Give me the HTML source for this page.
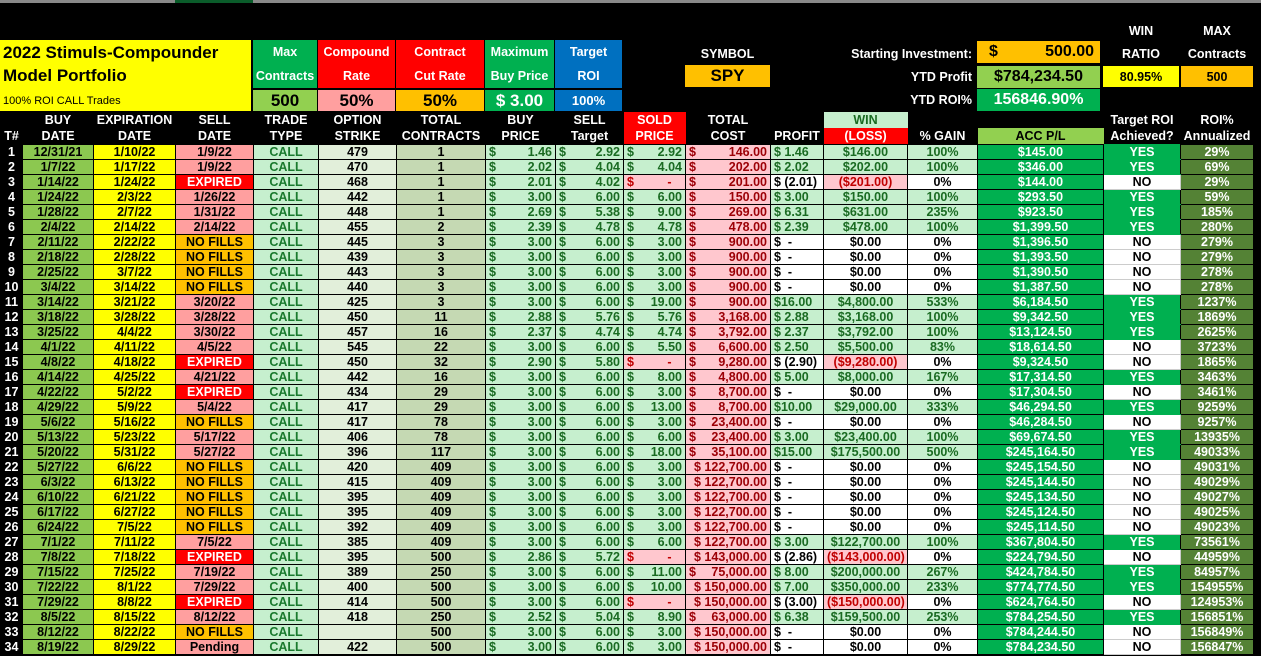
<!DOCTYPE html>
<html><head><meta charset="utf-8"><style>
*{margin:0;padding:0;box-sizing:border-box}
body{width:1261px;height:656px;background:#000;overflow:hidden;position:relative;font-family:"Liberation Sans Narrow","Liberation Sans",sans-serif;font-weight:bold;font-size:12.5px;color:#000}
.a{position:absolute;display:flex;align-items:center;justify-content:center;text-align:center}
.w{color:#fff}
table{position:absolute;left:0;top:112px;border-collapse:collapse;table-layout:fixed;width:1253px}
td{height:15px;line-height:14px;padding:0 3px;text-align:center;white-space:nowrap;overflow:hidden;border:1px solid #000}
thead td{height:16px;background:#000;color:#fff;border:none;font-size:12.5px}
i{font-style:normal;float:left}
td.n{background:#000;color:#fff}
.bd{background:#8cc850}
.ex{background:#ffff00}
.sd{background:#ff9f9f}
.xp{background:#ff0000;color:#fff}
.nf{background:#ffc000}
.tt{background:#c6efce;color:#1a7a2e}
.st{background:#e2efda}
.tc{background:#c5d9b3}
.m{background:#c6efce;color:#1a6b22;text-align:right}
.sp{background:#ffc7ce;color:#c00000;text-align:right}
.tco{background:#ffc7ce;color:#9c0006;text-align:right}
.pf{background:#c6efce;color:#1a6b22;text-align:left}
.pw{background:#fff;text-align:left}
.wg{background:#c6efce;color:#1a6b22}
.ww{background:#fff}
.wl{background:#ffc7ce;color:#c00000}
.acc{background:#00b050;color:#fff}
.y{background:#00b050;color:#fff;border-top-color:#00b050;border-bottom-color:#00b050}
.no{background:#fff;border-color:#ccc}
.r{background:#548235;color:#fff}
</style></head><body>
<div style="position:absolute;left:0;top:0;width:1261px;height:3px;background:#888"></div>
<div style="position:absolute;left:175px;top:0;width:78px;height:3px;background:#0a5c2a"></div>

<div style="position:absolute;left:0;top:40px;width:251px;height:71px;background:#ffff00;font-family:'Liberation Sans',sans-serif">
<div style="position:absolute;left:3px;top:3px;font-size:17px">2022 Stimuls-Compounder</div>
<div style="position:absolute;left:3px;top:26px;font-size:17px">Model Portfolio</div>
<div style="position:absolute;left:3px;top:55px;font-size:11px;font-weight:normal;font-family:'Liberation Sans Narrow','Liberation Sans',sans-serif">100% ROI CALL Trades</div>
</div>

<div class="a w" style="left:253px;top:40px;width:64px;height:48px;background:#00b050;line-height:24px">Max<br>Contracts</div>
<div class="a" style="left:253px;top:90px;width:64px;height:21px;background:#92d050;font-size:17px">500</div>
<div class="a w" style="left:318px;top:40px;width:77px;height:48px;background:#ff0000;line-height:24px">Compound<br>Rate</div>
<div class="a" style="left:318px;top:90px;width:77px;height:21px;background:#ff9f9f;font-size:17px">50%</div>
<div class="a w" style="left:396px;top:40px;width:88px;height:48px;background:#ff0000;line-height:24px">Contract<br>Cut Rate</div>
<div class="a" style="left:396px;top:90px;width:88px;height:21px;background:#ffc000;font-size:17px">50%</div>
<div class="a w" style="left:485px;top:40px;width:69px;height:48px;background:#00b050;line-height:24px">Maximum<br>Buy Price</div>
<div class="a w" style="left:485px;top:90px;width:69px;height:21px;background:#00b050;font-size:17px">$ 3.00</div>
<div class="a w" style="left:555px;top:40px;width:67px;height:48px;background:#0070c0;line-height:24px">Target<br>ROI</div>
<div class="a w" style="left:555px;top:90px;width:67px;height:21px;background:#0070c0;font-size:13px">100%</div>

<div class="a w" style="left:685px;top:45px;width:85px;height:18px">SYMBOL</div>
<div class="a" style="left:685px;top:65px;width:85px;height:22px;background:#ffc000;font-size:17px;font-family:'Liberation Sans',sans-serif">SPY</div>
<div class="a w" style="left:780px;top:45px;width:192px;height:18px;justify-content:flex-end">Starting Investment:</div>
<div style="position:absolute;left:977px;top:41px;width:123px;height:22px;background:#ffc000;font-size:16px;line-height:22px;padding:0 6px 0 12px"><span style="float:left">$</span><span style="float:right">500.00</span></div>
<div class="a w" style="left:780px;top:68px;width:192px;height:18px;justify-content:flex-end">YTD Profit</div>
<div class="a" style="left:977px;top:66px;width:123px;height:22px;background:#92d050;font-size:16px">$784,234.50</div>
<div class="a w" style="left:780px;top:91px;width:192px;height:18px;justify-content:flex-end">YTD ROI%</div>
<div class="a w" style="left:977px;top:89px;width:123px;height:22px;background:#00b050;font-size:16px">156846.90%</div>
<div class="a w" style="left:1103px;top:22px;width:76px;height:18px">WIN</div>
<div class="a w" style="left:1103px;top:45px;width:76px;height:18px">RATIO</div>
<div class="a" style="left:1103px;top:66px;width:76px;height:21px;background:#ffff00">80.95%</div>
<div class="a w" style="left:1181px;top:22px;width:72px;height:18px">MAX</div>
<div class="a w" style="left:1181px;top:45px;width:72px;height:18px">Contracts</div>
<div class="a" style="left:1181px;top:66px;width:72px;height:21px;background:#ffc000">500</div>

<table>
<colgroup><col style="width:22px"><col style="width:71px"><col style="width:82px"><col style="width:78px"><col style="width:65px"><col style="width:78px"><col style="width:89px"><col style="width:70px"><col style="width:68px"><col style="width:62px"><col style="width:85px"><col style="width:53px"><col style="width:84px"><col style="width:70px"><col style="width:126px"><col style="width:77px"><col style="width:73px"></colgroup>
<thead>
<tr><td></td><td>BUY</td><td>EXPIRATION</td><td>SELL</td><td>TRADE</td><td>OPTION</td><td>TOTAL</td><td>BUY</td><td>SELL</td><td style="background:#ff0000">SOLD</td><td>TOTAL</td><td></td><td style="background:#c6efce;color:#1a6b22">WIN</td><td></td><td></td><td>Target ROI</td><td>ROI%</td></tr>
<tr><td>T#</td><td>DATE</td><td>DATE</td><td>DATE</td><td>TYPE</td><td>STRIKE</td><td>CONTRACTS</td><td>PRICE</td><td>Target</td><td style="background:#ff0000">PRICE</td><td>COST</td><td>PROFIT</td><td style="background:#ff0000">(LOSS)</td><td>% GAIN</td><td style="background:#92d050;color:#000">ACC P/L</td><td>Achieved?</td><td>Annualized</td></tr>
</thead>
<tbody>
<tr><td class="n">1</td><td class="bd">12/31/21</td><td class="ex">1/10/22</td><td class="sd">1/9/22</td><td class="tt">CALL</td><td class="st">479</td><td class="tc">1</td><td class="m"><i>$</i>1.46</td><td class="m"><i>$</i>2.92</td><td class="m"><i>$</i>2.92</td><td class="tco"><i>$</i>146.00</td><td class="pf">$ 1.46</td><td class="wg">$146.00</td><td class="wg">100%</td><td class="acc">$145.00</td><td class="y">YES</td><td class="r">29%</td></tr>
<tr><td class="n">2</td><td class="bd">1/7/22</td><td class="ex">1/17/22</td><td class="sd">1/9/22</td><td class="tt">CALL</td><td class="st">470</td><td class="tc">1</td><td class="m"><i>$</i>2.02</td><td class="m"><i>$</i>4.04</td><td class="m"><i>$</i>4.04</td><td class="tco"><i>$</i>202.00</td><td class="pf">$ 2.02</td><td class="wg">$202.00</td><td class="wg">100%</td><td class="acc">$346.00</td><td class="y">YES</td><td class="r">69%</td></tr>
<tr><td class="n">3</td><td class="bd">1/14/22</td><td class="ex">1/24/22</td><td class="xp">EXPIRED</td><td class="tt">CALL</td><td class="st">468</td><td class="tc">1</td><td class="m"><i>$</i>2.01</td><td class="m"><i>$</i>4.02</td><td class="sp"><i>$</i>-&nbsp;&nbsp;&nbsp;</td><td class="tco"><i>$</i>201.00</td><td class="pw">$ (2.01)</td><td class="wl">($201.00)</td><td class="ww">0%</td><td class="acc">$144.00</td><td class="no">NO</td><td class="r">29%</td></tr>
<tr><td class="n">4</td><td class="bd">1/24/22</td><td class="ex">2/3/22</td><td class="sd">1/26/22</td><td class="tt">CALL</td><td class="st">442</td><td class="tc">1</td><td class="m"><i>$</i>3.00</td><td class="m"><i>$</i>6.00</td><td class="m"><i>$</i>6.00</td><td class="tco"><i>$</i>150.00</td><td class="pf">$ 3.00</td><td class="wg">$150.00</td><td class="wg">100%</td><td class="acc">$293.50</td><td class="y">YES</td><td class="r">59%</td></tr>
<tr><td class="n">5</td><td class="bd">1/28/22</td><td class="ex">2/7/22</td><td class="sd">1/31/22</td><td class="tt">CALL</td><td class="st">448</td><td class="tc">1</td><td class="m"><i>$</i>2.69</td><td class="m"><i>$</i>5.38</td><td class="m"><i>$</i>9.00</td><td class="tco"><i>$</i>269.00</td><td class="pf">$ 6.31</td><td class="wg">$631.00</td><td class="wg">235%</td><td class="acc">$923.50</td><td class="y">YES</td><td class="r">185%</td></tr>
<tr><td class="n">6</td><td class="bd">2/4/22</td><td class="ex">2/14/22</td><td class="sd">2/14/22</td><td class="tt">CALL</td><td class="st">455</td><td class="tc">2</td><td class="m"><i>$</i>2.39</td><td class="m"><i>$</i>4.78</td><td class="m"><i>$</i>4.78</td><td class="tco"><i>$</i>478.00</td><td class="pf">$ 2.39</td><td class="wg">$478.00</td><td class="wg">100%</td><td class="acc">$1,399.50</td><td class="y">YES</td><td class="r">280%</td></tr>
<tr><td class="n">7</td><td class="bd">2/11/22</td><td class="ex">2/22/22</td><td class="nf">NO FILLS</td><td class="tt">CALL</td><td class="st">445</td><td class="tc">3</td><td class="m"><i>$</i>3.00</td><td class="m"><i>$</i>6.00</td><td class="m"><i>$</i>3.00</td><td class="tco"><i>$</i>900.00</td><td class="pw">$ &nbsp;-</td><td class="ww">$0.00</td><td class="ww">0%</td><td class="acc">$1,396.50</td><td class="no">NO</td><td class="r">279%</td></tr>
<tr><td class="n">8</td><td class="bd">2/18/22</td><td class="ex">2/28/22</td><td class="nf">NO FILLS</td><td class="tt">CALL</td><td class="st">439</td><td class="tc">3</td><td class="m"><i>$</i>3.00</td><td class="m"><i>$</i>6.00</td><td class="m"><i>$</i>3.00</td><td class="tco"><i>$</i>900.00</td><td class="pw">$ &nbsp;-</td><td class="ww">$0.00</td><td class="ww">0%</td><td class="acc">$1,393.50</td><td class="no">NO</td><td class="r">279%</td></tr>
<tr><td class="n">9</td><td class="bd">2/25/22</td><td class="ex">3/7/22</td><td class="nf">NO FILLS</td><td class="tt">CALL</td><td class="st">443</td><td class="tc">3</td><td class="m"><i>$</i>3.00</td><td class="m"><i>$</i>6.00</td><td class="m"><i>$</i>3.00</td><td class="tco"><i>$</i>900.00</td><td class="pw">$ &nbsp;-</td><td class="ww">$0.00</td><td class="ww">0%</td><td class="acc">$1,390.50</td><td class="no">NO</td><td class="r">278%</td></tr>
<tr><td class="n">10</td><td class="bd">3/4/22</td><td class="ex">3/14/22</td><td class="nf">NO FILLS</td><td class="tt">CALL</td><td class="st">440</td><td class="tc">3</td><td class="m"><i>$</i>3.00</td><td class="m"><i>$</i>6.00</td><td class="m"><i>$</i>3.00</td><td class="tco"><i>$</i>900.00</td><td class="pw">$ &nbsp;-</td><td class="ww">$0.00</td><td class="ww">0%</td><td class="acc">$1,387.50</td><td class="no">NO</td><td class="r">278%</td></tr>
<tr><td class="n">11</td><td class="bd">3/14/22</td><td class="ex">3/21/22</td><td class="sd">3/20/22</td><td class="tt">CALL</td><td class="st">425</td><td class="tc">3</td><td class="m"><i>$</i>3.00</td><td class="m"><i>$</i>6.00</td><td class="m"><i>$</i>19.00</td><td class="tco"><i>$</i>900.00</td><td class="pf">$16.00</td><td class="wg">$4,800.00</td><td class="wg">533%</td><td class="acc">$6,184.50</td><td class="y">YES</td><td class="r">1237%</td></tr>
<tr><td class="n">12</td><td class="bd">3/18/22</td><td class="ex">3/28/22</td><td class="sd">3/28/22</td><td class="tt">CALL</td><td class="st">450</td><td class="tc">11</td><td class="m"><i>$</i>2.88</td><td class="m"><i>$</i>5.76</td><td class="m"><i>$</i>5.76</td><td class="tco"><i>$</i>3,168.00</td><td class="pf">$ 2.88</td><td class="wg">$3,168.00</td><td class="wg">100%</td><td class="acc">$9,342.50</td><td class="y">YES</td><td class="r">1869%</td></tr>
<tr><td class="n">13</td><td class="bd">3/25/22</td><td class="ex">4/4/22</td><td class="sd">3/30/22</td><td class="tt">CALL</td><td class="st">457</td><td class="tc">16</td><td class="m"><i>$</i>2.37</td><td class="m"><i>$</i>4.74</td><td class="m"><i>$</i>4.74</td><td class="tco"><i>$</i>3,792.00</td><td class="pf">$ 2.37</td><td class="wg">$3,792.00</td><td class="wg">100%</td><td class="acc">$13,124.50</td><td class="y">YES</td><td class="r">2625%</td></tr>
<tr><td class="n">14</td><td class="bd">4/1/22</td><td class="ex">4/11/22</td><td class="sd">4/5/22</td><td class="tt">CALL</td><td class="st">545</td><td class="tc">22</td><td class="m"><i>$</i>3.00</td><td class="m"><i>$</i>6.00</td><td class="m"><i>$</i>5.50</td><td class="tco"><i>$</i>6,600.00</td><td class="pf">$ 2.50</td><td class="wg">$5,500.00</td><td class="wg">83%</td><td class="acc">$18,614.50</td><td class="no">NO</td><td class="r">3723%</td></tr>
<tr><td class="n">15</td><td class="bd">4/8/22</td><td class="ex">4/18/22</td><td class="xp">EXPIRED</td><td class="tt">CALL</td><td class="st">450</td><td class="tc">32</td><td class="m"><i>$</i>2.90</td><td class="m"><i>$</i>5.80</td><td class="sp"><i>$</i>-&nbsp;&nbsp;&nbsp;</td><td class="tco"><i>$</i>9,280.00</td><td class="pw">$ (2.90)</td><td class="wl">($9,280.00)</td><td class="ww">0%</td><td class="acc">$9,324.50</td><td class="no">NO</td><td class="r">1865%</td></tr>
<tr><td class="n">16</td><td class="bd">4/14/22</td><td class="ex">4/25/22</td><td class="sd">4/21/22</td><td class="tt">CALL</td><td class="st">442</td><td class="tc">16</td><td class="m"><i>$</i>3.00</td><td class="m"><i>$</i>6.00</td><td class="m"><i>$</i>8.00</td><td class="tco"><i>$</i>4,800.00</td><td class="pf">$ 5.00</td><td class="wg">$8,000.00</td><td class="wg">167%</td><td class="acc">$17,314.50</td><td class="y">YES</td><td class="r">3463%</td></tr>
<tr><td class="n">17</td><td class="bd">4/22/22</td><td class="ex">5/2/22</td><td class="xp">EXPIRED</td><td class="tt">CALL</td><td class="st">434</td><td class="tc">29</td><td class="m"><i>$</i>3.00</td><td class="m"><i>$</i>6.00</td><td class="m"><i>$</i>3.00</td><td class="tco"><i>$</i>8,700.00</td><td class="pw">$ &nbsp;-</td><td class="ww">$0.00</td><td class="ww">0%</td><td class="acc">$17,304.50</td><td class="no">NO</td><td class="r">3461%</td></tr>
<tr><td class="n">18</td><td class="bd">4/29/22</td><td class="ex">5/9/22</td><td class="sd">5/4/22</td><td class="tt">CALL</td><td class="st">417</td><td class="tc">29</td><td class="m"><i>$</i>3.00</td><td class="m"><i>$</i>6.00</td><td class="m"><i>$</i>13.00</td><td class="tco"><i>$</i>8,700.00</td><td class="pf">$10.00</td><td class="wg">$29,000.00</td><td class="wg">333%</td><td class="acc">$46,294.50</td><td class="y">YES</td><td class="r">9259%</td></tr>
<tr><td class="n">19</td><td class="bd">5/6/22</td><td class="ex">5/16/22</td><td class="nf">NO FILLS</td><td class="tt">CALL</td><td class="st">417</td><td class="tc">78</td><td class="m"><i>$</i>3.00</td><td class="m"><i>$</i>6.00</td><td class="m"><i>$</i>3.00</td><td class="tco"><i>$</i>23,400.00</td><td class="pw">$ &nbsp;-</td><td class="ww">$0.00</td><td class="ww">0%</td><td class="acc">$46,284.50</td><td class="no">NO</td><td class="r">9257%</td></tr>
<tr><td class="n">20</td><td class="bd">5/13/22</td><td class="ex">5/23/22</td><td class="sd">5/17/22</td><td class="tt">CALL</td><td class="st">406</td><td class="tc">78</td><td class="m"><i>$</i>3.00</td><td class="m"><i>$</i>6.00</td><td class="m"><i>$</i>6.00</td><td class="tco"><i>$</i>23,400.00</td><td class="pf">$ 3.00</td><td class="wg">$23,400.00</td><td class="wg">100%</td><td class="acc">$69,674.50</td><td class="y">YES</td><td class="r">13935%</td></tr>
<tr><td class="n">21</td><td class="bd">5/20/22</td><td class="ex">5/31/22</td><td class="sd">5/27/22</td><td class="tt">CALL</td><td class="st">396</td><td class="tc">117</td><td class="m"><i>$</i>3.00</td><td class="m"><i>$</i>6.00</td><td class="m"><i>$</i>18.00</td><td class="tco"><i>$</i>35,100.00</td><td class="pf">$15.00</td><td class="wg">$175,500.00</td><td class="wg">500%</td><td class="acc">$245,164.50</td><td class="y">YES</td><td class="r">49033%</td></tr>
<tr><td class="n">22</td><td class="bd">5/27/22</td><td class="ex">6/6/22</td><td class="nf">NO FILLS</td><td class="tt">CALL</td><td class="st">420</td><td class="tc">409</td><td class="m"><i>$</i>3.00</td><td class="m"><i>$</i>6.00</td><td class="m"><i>$</i>3.00</td><td class="tco">$ 122,700.00</td><td class="pw">$ &nbsp;-</td><td class="ww">$0.00</td><td class="ww">0%</td><td class="acc">$245,154.50</td><td class="no">NO</td><td class="r">49031%</td></tr>
<tr><td class="n">23</td><td class="bd">6/3/22</td><td class="ex">6/13/22</td><td class="nf">NO FILLS</td><td class="tt">CALL</td><td class="st">415</td><td class="tc">409</td><td class="m"><i>$</i>3.00</td><td class="m"><i>$</i>6.00</td><td class="m"><i>$</i>3.00</td><td class="tco">$ 122,700.00</td><td class="pw">$ &nbsp;-</td><td class="ww">$0.00</td><td class="ww">0%</td><td class="acc">$245,144.50</td><td class="no">NO</td><td class="r">49029%</td></tr>
<tr><td class="n">24</td><td class="bd">6/10/22</td><td class="ex">6/21/22</td><td class="nf">NO FILLS</td><td class="tt">CALL</td><td class="st">395</td><td class="tc">409</td><td class="m"><i>$</i>3.00</td><td class="m"><i>$</i>6.00</td><td class="m"><i>$</i>3.00</td><td class="tco">$ 122,700.00</td><td class="pw">$ &nbsp;-</td><td class="ww">$0.00</td><td class="ww">0%</td><td class="acc">$245,134.50</td><td class="no">NO</td><td class="r">49027%</td></tr>
<tr><td class="n">25</td><td class="bd">6/17/22</td><td class="ex">6/27/22</td><td class="nf">NO FILLS</td><td class="tt">CALL</td><td class="st">395</td><td class="tc">409</td><td class="m"><i>$</i>3.00</td><td class="m"><i>$</i>6.00</td><td class="m"><i>$</i>3.00</td><td class="tco">$ 122,700.00</td><td class="pw">$ &nbsp;-</td><td class="ww">$0.00</td><td class="ww">0%</td><td class="acc">$245,124.50</td><td class="no">NO</td><td class="r">49025%</td></tr>
<tr><td class="n">26</td><td class="bd">6/24/22</td><td class="ex">7/5/22</td><td class="nf">NO FILLS</td><td class="tt">CALL</td><td class="st">392</td><td class="tc">409</td><td class="m"><i>$</i>3.00</td><td class="m"><i>$</i>6.00</td><td class="m"><i>$</i>3.00</td><td class="tco">$ 122,700.00</td><td class="pw">$ &nbsp;-</td><td class="ww">$0.00</td><td class="ww">0%</td><td class="acc">$245,114.50</td><td class="no">NO</td><td class="r">49023%</td></tr>
<tr><td class="n">27</td><td class="bd">7/1/22</td><td class="ex">7/11/22</td><td class="sd">7/5/22</td><td class="tt">CALL</td><td class="st">385</td><td class="tc">409</td><td class="m"><i>$</i>3.00</td><td class="m"><i>$</i>6.00</td><td class="m"><i>$</i>6.00</td><td class="tco">$ 122,700.00</td><td class="pf">$ 3.00</td><td class="wg">$122,700.00</td><td class="wg">100%</td><td class="acc">$367,804.50</td><td class="y">YES</td><td class="r">73561%</td></tr>
<tr><td class="n">28</td><td class="bd">7/8/22</td><td class="ex">7/18/22</td><td class="xp">EXPIRED</td><td class="tt">CALL</td><td class="st">395</td><td class="tc">500</td><td class="m"><i>$</i>2.86</td><td class="m"><i>$</i>5.72</td><td class="sp"><i>$</i>-&nbsp;&nbsp;&nbsp;</td><td class="tco">$ 143,000.00</td><td class="pw">$ (2.86)</td><td class="wl">($143,000.00)</td><td class="ww">0%</td><td class="acc">$224,794.50</td><td class="no">NO</td><td class="r">44959%</td></tr>
<tr><td class="n">29</td><td class="bd">7/15/22</td><td class="ex">7/25/22</td><td class="sd">7/19/22</td><td class="tt">CALL</td><td class="st">389</td><td class="tc">250</td><td class="m"><i>$</i>3.00</td><td class="m"><i>$</i>6.00</td><td class="m"><i>$</i>11.00</td><td class="tco"><i>$</i>75,000.00</td><td class="pf">$ 8.00</td><td class="wg">$200,000.00</td><td class="wg">267%</td><td class="acc">$424,784.50</td><td class="y">YES</td><td class="r">84957%</td></tr>
<tr><td class="n">30</td><td class="bd">7/22/22</td><td class="ex">8/1/22</td><td class="sd">7/29/22</td><td class="tt">CALL</td><td class="st">400</td><td class="tc">500</td><td class="m"><i>$</i>3.00</td><td class="m"><i>$</i>6.00</td><td class="m"><i>$</i>10.00</td><td class="tco">$ 150,000.00</td><td class="pf">$ 7.00</td><td class="wg">$350,000.00</td><td class="wg">233%</td><td class="acc">$774,774.50</td><td class="y">YES</td><td class="r">154955%</td></tr>
<tr><td class="n">31</td><td class="bd">7/29/22</td><td class="ex">8/8/22</td><td class="xp">EXPIRED</td><td class="tt">CALL</td><td class="st">414</td><td class="tc">500</td><td class="m"><i>$</i>3.00</td><td class="m"><i>$</i>6.00</td><td class="sp"><i>$</i>-&nbsp;&nbsp;&nbsp;</td><td class="tco">$ 150,000.00</td><td class="pw">$ (3.00)</td><td class="wl">($150,000.00)</td><td class="ww">0%</td><td class="acc">$624,764.50</td><td class="no">NO</td><td class="r">124953%</td></tr>
<tr><td class="n">32</td><td class="bd">8/5/22</td><td class="ex">8/15/22</td><td class="sd">8/12/22</td><td class="tt">CALL</td><td class="st">418</td><td class="tc">250</td><td class="m"><i>$</i>2.52</td><td class="m"><i>$</i>5.04</td><td class="m"><i>$</i>8.90</td><td class="tco"><i>$</i>63,000.00</td><td class="pf">$ 6.38</td><td class="wg">$159,500.00</td><td class="wg">253%</td><td class="acc">$784,254.50</td><td class="y">YES</td><td class="r">156851%</td></tr>
<tr><td class="n">33</td><td class="bd">8/12/22</td><td class="ex">8/22/22</td><td class="nf">NO FILLS</td><td class="tt">CALL</td><td class="st"></td><td class="tc">500</td><td class="m"><i>$</i>3.00</td><td class="m"><i>$</i>6.00</td><td class="m"><i>$</i>3.00</td><td class="tco">$ 150,000.00</td><td class="pw">$ &nbsp;-</td><td class="ww">$0.00</td><td class="ww">0%</td><td class="acc">$784,244.50</td><td class="no">NO</td><td class="r">156849%</td></tr>
<tr><td class="n">34</td><td class="bd">8/19/22</td><td class="ex">8/29/22</td><td class="sd">Pending</td><td class="tt">CALL</td><td class="st">422</td><td class="tc">500</td><td class="m"><i>$</i>3.00</td><td class="m"><i>$</i>6.00</td><td class="m"><i>$</i>3.00</td><td class="tco">$ 150,000.00</td><td class="pw">$ &nbsp;-</td><td class="ww">$0.00</td><td class="ww">0%</td><td class="acc">$784,234.50</td><td class="no">NO</td><td class="r">156847%</td></tr>
</tbody></table>
</body></html>
